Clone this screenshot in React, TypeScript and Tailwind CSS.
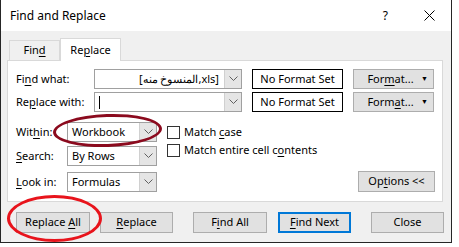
import React from 'react';

const font = "font-['Noto_Sans',sans-serif] text-[11px] text-black";

function Chevron() {
  return (
    <svg width="9" height="6" viewBox="0 0 9 6" className="block">
      <path d="M0.5 0.5 L4.5 4.5 L8.5 0.5" fill="none" stroke="#606060" strokeWidth="1" />
    </svg>
  );
}

function Combo({ width, children, caret = false }: { width: string; children?: React.ReactNode; caret?: boolean }) {
  return (
    <div className={`${width} h-[20px] flex border border-[#a0a0a0] bg-white`}>
      <div className="flex-1 flex items-center px-[4px] overflow-hidden whitespace-nowrap">
        {caret && <span className="w-px h-[13px] bg-black" />}
        {children}
      </div>
      <div className="w-[17px] flex items-center justify-center bg-[#e5e5e5] border-l border-[#d0d0d0]">
        <Chevron />
      </div>
    </div>
  );
}

function Btn({ children, className = '' }: { children: React.ReactNode; className?: string }) {
  return (
    <div className={`flex items-center justify-center bg-[#e1e1e1] border border-[#adadad] ${className}`}>
      <span>{children}</span>
    </div>
  );
}

function Check({ children }: { children: React.ReactNode }) {
  return (
    <div className="flex items-center h-[18px]">
      <div className="w-[13px] h-[13px] border border-[#333] bg-white mr-[4px]" />
      <span>{children}</span>
    </div>
  );
}

const U = ({ children }: { children: React.ReactNode }) => (
  <span className="underline underline-offset-2">{children}</span>
);

function FormatBtn({ children }: { children: React.ReactNode }) {
  return (
    <div className="ml-[10px] w-[81px] h-[20px] relative flex items-center justify-center bg-[#e1e1e1] border border-[#adadad]">
      <span className="mr-[6px]">{children}</span>
      <span className="absolute right-[5px] text-[7px]">▼</span>
    </div>
  );
}

export default function App() {
  return (
    <div className={`relative w-[459px] h-[247px] bg-white ${font}`}>
      <div className="w-[452px] h-[243px] flex flex-col border-l border-r border-b border-[#262626]">
        {/* Title bar */}
        <div className="h-[31px] bg-white flex items-center pl-[9px] pr-[16px]">
          <span className="text-[12px] flex-1">Find and Replace</span>
          <span className="text-[12px] mr-[36px]">?</span>
          <svg width="11" height="11" viewBox="0 0 11 11">
            <path d="M0.5 0.5 L10.5 10.5 M10.5 0.5 L0.5 10.5" stroke="#000" strokeWidth="1" />
          </svg>
        </div>

        {/* Body */}
        <div className="flex-1 bg-[#f0f0f0] pt-[7px] px-[6px]">
          {/* Tabs */}
          <div className="flex items-end h-[22px] pl-[2px]">
            <div className="w-[51px] h-[20px] flex items-center justify-center border border-b-0 border-[#d9d9d9] bg-[#f0f0f0]">
              <span>Fin<U>d</U></span>
            </div>
            <div className="w-[61px] h-[23px] -mb-px flex items-center justify-center border border-b-0 border-[#d9d9d9] bg-white relative z-10">
              <span>Re<U>p</U>lace</span>
            </div>
          </div>

          {/* Panel */}
          <div className="w-[436px] h-[142px] bg-white border border-[#d9d9d9] pt-[8px] pl-[8px] flex flex-col">
            <div className="flex items-center h-[20px]">
              <span className="w-[78px]">Fi<U>n</U>d what:</span>
              <Combo width="w-[148px]">
                <span className="flex-1 text-right pr-[1px]" dir="ltr">[المنسوخ منه,xls]</span>
              </Combo>
              <div className="ml-[10px] w-[91px] h-[20px] border border-black flex items-center justify-center">No Format Set</div>
              <FormatBtn>For<U>m</U>at...</FormatBtn>
            </div>
            <div className="flex items-center h-[20px] mt-[3px]">
              <span className="w-[78px]">Re<U>p</U>lace with:</span>
              <Combo width="w-[148px]" caret />
              <div className="ml-[10px] w-[91px] h-[20px] border border-black flex items-center justify-center">No Format Set</div>
              <FormatBtn>Form<U>a</U>t...</FormatBtn>
            </div>

            <div className="flex mt-[10px]">
              <div className="flex flex-col gap-[4px]">
                <div className="flex items-center">
                  <span className="w-[51px]">Wit<U>h</U>in:</span>
                  <Combo width="w-[90px]"><span>Workbook</span></Combo>
                </div>
                <div className="flex items-center">
                  <span className="w-[51px]"><U>S</U>earch:</span>
                  <Combo width="w-[90px]"><span>By Rows</span></Combo>
                </div>
                <div className="flex items-center mt-[2px]">
                  <span className="w-[51px]"><U>L</U>ook in:</span>
                  <Combo width="w-[90px]"><span>Formulas</span></Combo>
                </div>
              </div>
              <div className="flex flex-col ml-[10px] pt-[1px]">
                <Check>Match <U>c</U>ase</Check>
                <Check>Match entire cell c<U>o</U>ntents</Check>
              </div>
              <div className="flex-1 flex items-end justify-end pr-[7px]">
                <Btn className="w-[77px] h-[21px]">Op<U>t</U>ions &lt;&lt;</Btn>
              </div>
            </div>
          </div>

          {/* Bottom buttons */}
          <div className="flex mt-[10px] pl-[9px]">
            <Btn className="w-[74px] h-[21px]">Replace <U>A</U>ll</Btn>
            <Btn className="w-[73px] h-[21px] ml-[10px]"><U>R</U>eplace</Btn>
            <Btn className="w-[74px] h-[21px] ml-[20px]">F<U>i</U>nd All</Btn>
            <div className="w-[73px] h-[21px] ml-[11px] flex items-center justify-center bg-[#e1e1e1] border-2 border-[#0078d7]">
              <span><U>F</U>ind Next</span>
            </div>
            <Btn className="w-[73px] h-[21px] ml-[20px]">Close</Btn>
          </div>
        </div>
      </div>

      {/* Annotations */}
      <div className="absolute left-[53px] top-[114px] w-[109px] h-[33px] rounded-[50%] border-[3px] border-[#8b0a1e] -rotate-2" />
      <div className="absolute left-[7px] top-[195px] w-[95px] h-[47px] rounded-[50%] border-[3px] border-[#e8141c]" />
    </div>
  );
}
